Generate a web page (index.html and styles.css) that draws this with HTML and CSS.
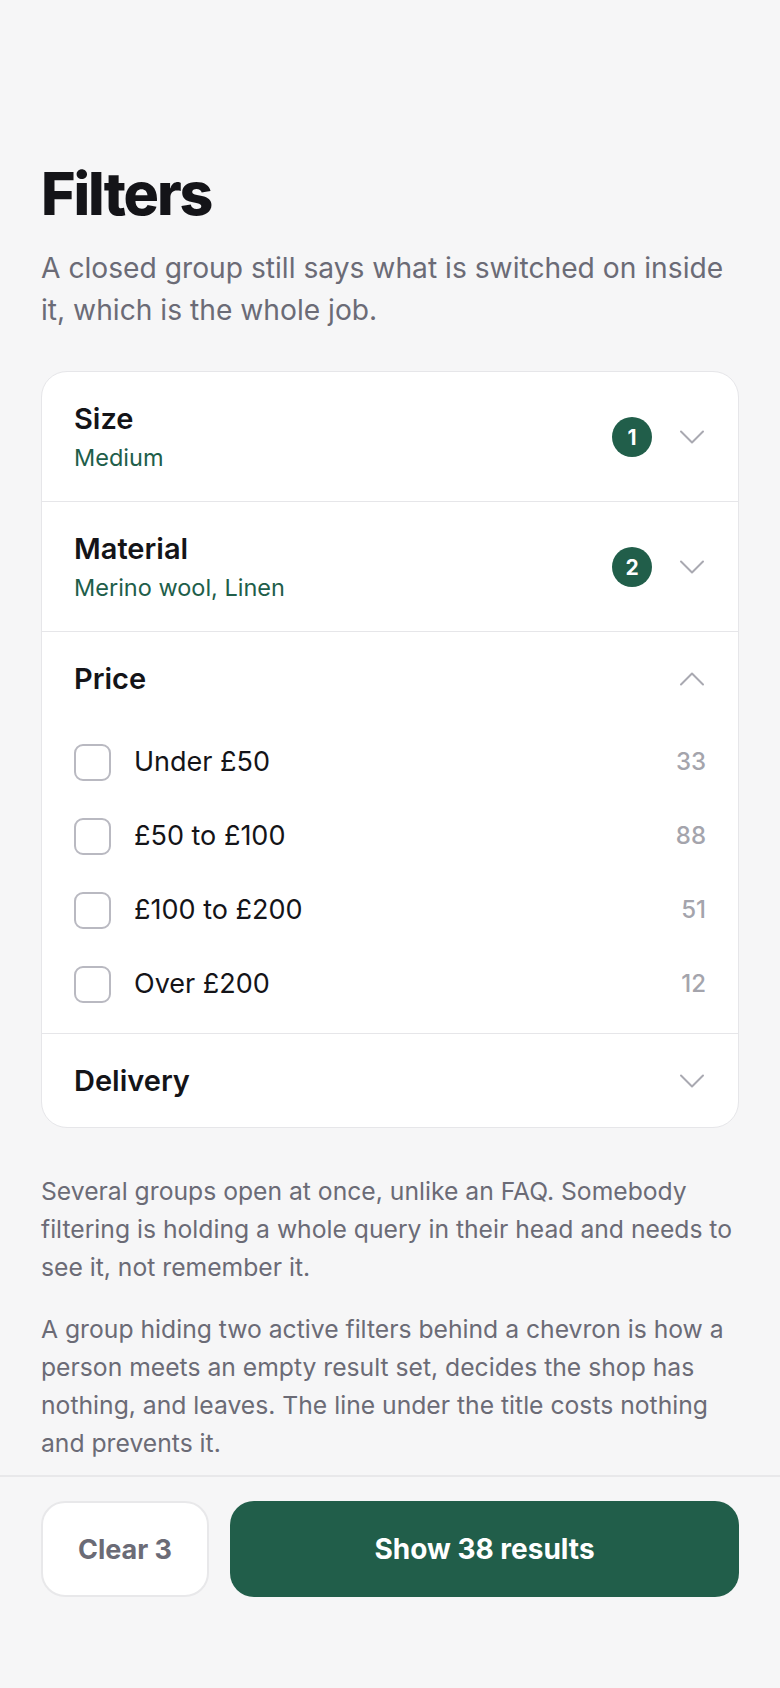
FILE: index.html
```html
<!DOCTYPE html>
<html lang="en">
<head>
<meta charset="utf-8">
<meta name="viewport" content="width=device-width, initial-scale=1">
<title>Filters</title>
<link rel="stylesheet" href="styles.css">
</head>
<body>
<div class="page">
  <main class="main">
    <h1 class="title">Filters</h1>
    <p class="lede">A closed group still says what is switched on inside it, which is the whole job.</p>

    <section class="card">
      <div class="group">
        <div class="group-head">
          <div class="group-text">
            <div class="group-title">Size</div>
            <div class="group-sub">Medium</div>
          </div>
          <span class="badge">1</span>
          <svg class="chev" viewBox="0 0 28 28" aria-hidden="true"><path d="M3 8.5 L14 19.5 L25 8.5"/></svg>
        </div>
      </div>

      <div class="group">
        <div class="group-head">
          <div class="group-text">
            <div class="group-title">Material</div>
            <div class="group-sub">Merino wool, Linen</div>
          </div>
          <span class="badge">2</span>
          <svg class="chev" viewBox="0 0 28 28" aria-hidden="true"><path d="M3 8.5 L14 19.5 L25 8.5"/></svg>
        </div>
      </div>

      <div class="group">
        <div class="group-head">
          <div class="group-text">
            <div class="group-title">Price</div>
          </div>
          <svg class="chev" viewBox="0 0 28 28" aria-hidden="true"><path d="M3 19.5 L14 8.5 L25 19.5"/></svg>
        </div>
        <ul class="options">
          <li class="option"><span class="box"></span><span class="opt-label">Under £50</span><span class="opt-count">33</span></li>
          <li class="option"><span class="box"></span><span class="opt-label">£50 to £100</span><span class="opt-count">88</span></li>
          <li class="option"><span class="box"></span><span class="opt-label">£100 to £200</span><span class="opt-count">51</span></li>
          <li class="option"><span class="box"></span><span class="opt-label">Over £200</span><span class="opt-count">12</span></li>
        </ul>
      </div>

      <div class="group">
        <div class="group-head">
          <div class="group-text">
            <div class="group-title">Delivery</div>
          </div>
          <svg class="chev" viewBox="0 0 28 28" aria-hidden="true"><path d="M3 8.5 L14 19.5 L25 8.5"/></svg>
        </div>
      </div>
    </section>

    <p class="note note-first">Several groups open at once, unlike an FAQ. Somebody filtering is holding a whole query in their head and needs to see it, not remember it.</p>
    <p class="note">A group hiding two active filters behind a chevron is how a person meets an empty result set, decides the shop has nothing, and leaves. The line under the title costs nothing and prevents it.</p>
  </main>

  <footer class="footer">
    <button class="btn btn-clear" type="button">Clear 3</button>
    <button class="btn btn-show" type="button">Show 38 results</button>
  </footer>
</div>
</body>
</html>
```

FILE: styles.css
```css
* { box-sizing: border-box; }

html, body {
  margin: 0;
  padding: 0;
  background: #f6f6f7;
}

body {
  font-family: Inter, "Noto Sans", "Liberation Sans", sans-serif;
  color: #141418;
  -webkit-font-smoothing: antialiased;
}

.page {
  min-height: 100vh;
  display: flex;
  flex-direction: column;
}

.main {
  padding: 161px 41px 0;
}

.title {
  margin: 0;
  font-size: 59px;
  line-height: 65px;
  font-weight: 800;
  letter-spacing: -0.035em;
  color: #141418;
}

.lede {
  margin: 21px 0 0;
  font-size: 28.2px;
  line-height: 42px;
  color: #6b6b76;
}

.card {
  margin-top: 40px;
  background: #ffffff;
  border: 1px solid #e6e6e9;
  border-radius: 26px;
  overflow: hidden;
}

.group + .group {
  border-top: 1px solid #e6e6e9;
}

.group-head {
  display: flex;
  align-items: center;
  padding: 29px 32px 28px;
}

.group-text {
  flex: 1;
  min-width: 0;
}

.group-title {
  font-size: 29px;
  line-height: 36px;
  font-weight: 600;
  color: #141418;
}

.group-sub {
  margin-top: 6px;
  font-size: 23.5px;
  line-height: 30px;
  color: #215e4a;
}

.badge {
  width: 40px;
  height: 40px;
  border-radius: 50%;
  background: #215e4a;
  color: #ffffff;
  font-size: 21px;
  font-weight: 700;
  display: flex;
  align-items: center;
  justify-content: center;
  margin-right: 26px;
  flex: none;
}

.chev {
  width: 28px;
  height: 28px;
  flex: none;
  fill: none;
  stroke: #a9a9b1;
  stroke-width: 2;
  stroke-linecap: round;
  stroke-linejoin: round;
}

.options {
  list-style: none;
  margin: 0;
  padding: 0 32px 12px;
}

.option {
  height: 74px;
  display: flex;
  align-items: center;
}

.box {
  width: 37px;
  height: 37px;
  border: 2px solid #b9b9c1;
  border-radius: 9px;
  flex: none;
  background: #ffffff;
}

.opt-label {
  flex: 1;
  margin-left: 23px;
  font-size: 27px;
  line-height: 36px;
  color: #141418;
}

.opt-count {
  font-size: 24px;
  line-height: 36px;
  font-weight: 500;
  color: #a4a4ac;
}

.note {
  margin: 24px 0 0;
  font-size: 24.7px;
  line-height: 38px;
  color: #6b6b76;
}

.note-first {
  margin-top: 44px;
}

.footer {
  margin-top: 13px;
  border-top: 2px solid #e8e8ea;
  padding: 24px 41px 92px;
  display: flex;
  gap: 21px;
}

.btn {
  height: 96px;
  border-radius: 24px;
  font-family: Inter, "Noto Sans", "Liberation Sans", sans-serif;
  font-weight: 700;
  cursor: pointer;
}

.btn-clear {
  width: 168px;
  flex: none;
  background: #ffffff;
  border: 2px solid #e8e8ea;
  color: #6b6b76;
  font-size: 27px;
}

.btn-show {
  flex: 1;
  background: #215e4a;
  border: none;
  color: #ffffff;
  font-size: 28px;
}
```
